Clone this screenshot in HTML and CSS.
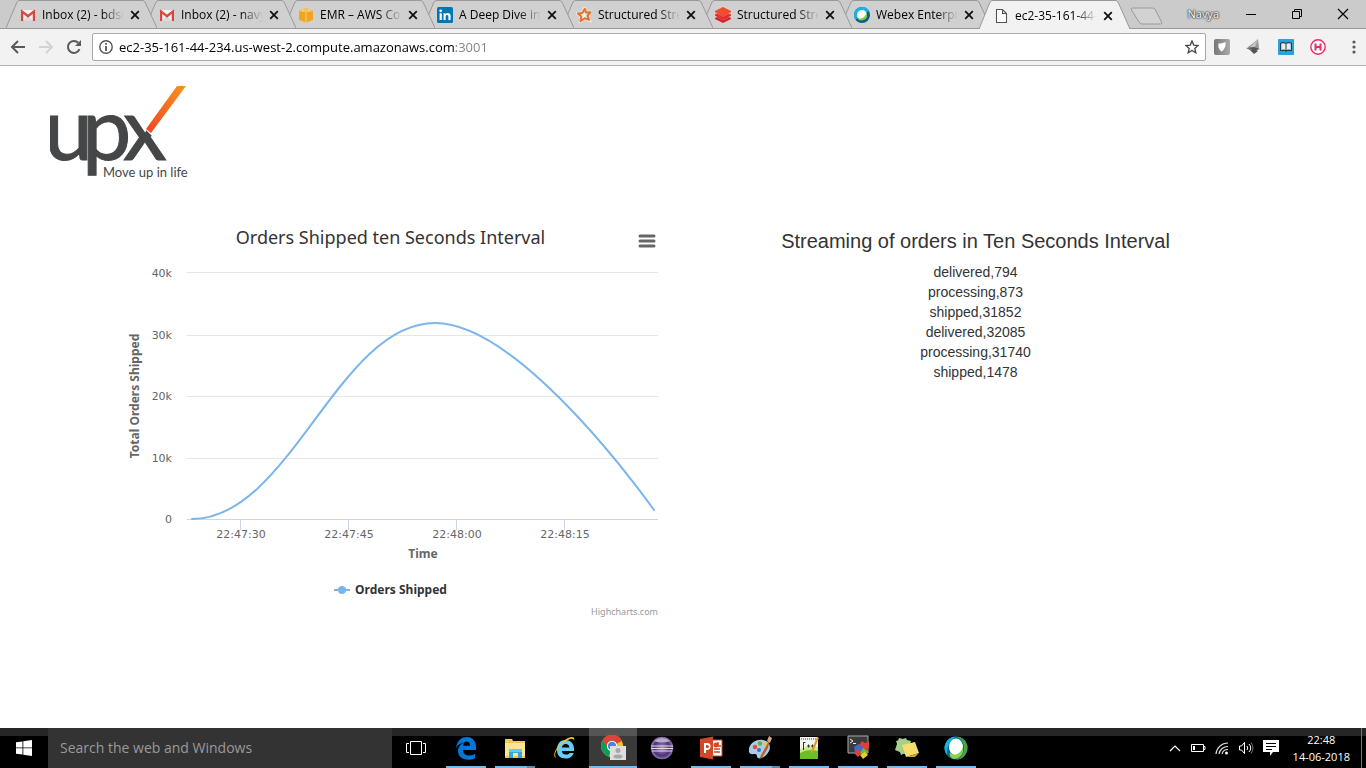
FILE: index.html
```html
<!DOCTYPE html>
<html lang="en">
<head>
<meta charset="utf-8">
<title>Orders Shipped</title>
<link rel="stylesheet" href="styles.css">
</head>
<body>
<svg class="defs" width="0" height="0" aria-hidden="true">
  <defs>
    <symbol id="gmail" viewBox="0 0 16 16"><path d="M1 3h14v11H1z" fill="#f3f1f0"/><path d="M3 14l5-5 5 5z" fill="#dcdad9"/><path d="M1 14V3.4L8 9l7-5.600V14h-2.200V6.700L8 10.800 3.200 6.700V14z" fill="#d8453a"/><path d="M1 3l7 5.500L15 3" fill="none" stroke="#d8453a" stroke-width="1.400"/></symbol>
    <symbol id="cross" viewBox="0 0 10 10"><path d="M1.200 1.200l7.600 7.600M8.800 1.200L1.200 8.800" stroke="#111" stroke-width="1.800" fill="none"/></symbol>
    <symbol id="webex" viewBox="0 0 24 24"><circle cx="12" cy="12" r="11.500" fill="#08668f"/><path d="M12 .5A11.500 11.500 0 0 0 3 19c0-8 2-14 9-18.500z" fill="#17b4e2"/><path d="M12 .5a11.500 11.500 0 0 1 0 23c5-2 8-6 8-12S16 2 12 .5z" fill="#45a746"/><ellipse cx="12" cy="11" rx="7" ry="8.500" fill="#fff"/><path d="M6 16c3 5 10 3 13-5 1 7-3 11-8 12-4 0-6-3-5-7z" fill="#8ed34a"/></symbol>
    <symbol id="webextab" viewBox="0 0 16 16"><circle cx="8" cy="8" r="8" fill="#0b5f86"/><path d="M8 0a8 8 0 0 0-6.500 12.500L8 8l7-4A8 8 0 0 0 8 0z" fill="#16b5e6"/><circle cx="8" cy="8" r="5" fill="#fff"/><path d="M12.500 5.500c2 4-1 8.500-6 8-2-.3-3-1.500-3-2.500 4 2 8-1 9-5.500z" fill="#7ecb3f"/></symbol>
  </defs>
</svg>

<header class="browser">
  <div class="strip">
    <nav class="tabs" aria-label="Tabs">
      <div class="tab"><svg class="edge" viewBox="0 0 151 28" preserveAspectRatio="none"><path d="M0 28L11 2l2-1.500h124l2 1.500 12 26"/></svg><svg class="fav"><use href="#gmail"/></svg><span class="label">Inbox (2) - bdsu</span><button class="close" aria-label="Close tab"><svg width="10" height="10"><use href="#cross"/></svg></button></div>
      <div class="tab"><svg class="edge" viewBox="0 0 151 28" preserveAspectRatio="none"><path d="M0 28L11 2l2-1.500h124l2 1.500 12 26"/></svg><svg class="fav"><use href="#gmail"/></svg><span class="label">Inbox (2) - navy</span><button class="close" aria-label="Close tab"><svg width="10" height="10"><use href="#cross"/></svg></button></div>
      <div class="tab"><svg class="edge" viewBox="0 0 151 28" preserveAspectRatio="none"><path d="M0 28L11 2l2-1.500h124l2 1.500 12 26"/></svg><svg class="fav" viewBox="0 0 16 16"><path d="M1 4l7-3 7 3v9l-7 2.500L1 13z" fill="#efa51f"/><path d="M1 4l7 1.600L15 4 8 1z" fill="#f9c35c"/><path d="M8 5.600V15.500M5 5V1.800M11 5V1.800" stroke="#f9d084" stroke-width="1"/></svg><span class="label">EMR – AWS Co</span><button class="close" aria-label="Close tab"><svg width="10" height="10"><use href="#cross"/></svg></button></div>
      <div class="tab"><svg class="edge" viewBox="0 0 151 28" preserveAspectRatio="none"><path d="M0 28L11 2l2-1.500h124l2 1.500 12 26"/></svg><svg class="fav" viewBox="0 0 16 16"><rect width="16" height="16" rx="1.500" fill="#0077b5"/><circle cx="3.700" cy="3.800" r="1.400" fill="#fff"/><path d="M2.600 6.200h2.200V13H2.600zM6.500 6.200h2.100v1c1.400-2 5-1.500 5 1.700V13h-2.200V9.500c0-2-2.700-2-2.700 0V13H6.500z" fill="#fff"/></svg><span class="label">A Deep Dive int</span><button class="close" aria-label="Close tab"><svg width="10" height="10"><use href="#cross"/></svg></button></div>
      <div class="tab"><svg class="edge" viewBox="0 0 151 28" preserveAspectRatio="none"><path d="M0 28L11 2l2-1.500h124l2 1.500 12 26"/></svg><svg class="fav" viewBox="0 0 16 16"><path d="M8.500 1.500l1.400 4 4.800-.3-3.400 3.400 2 4.600-4.500-1.700-4.600 3 .9-5L1.500 6.500l4.700-.7z" fill="#eee" stroke="#eee" stroke-width="3"/><path d="M8.800 1.800l1.200 3.800 4.600-.3-3.200 3.400 1.700 4.200-4.300-1.600-4.400 2.900.9-4.800L1.800 6.500l4.500-.6z" fill="none" stroke="#e8702a" stroke-width="2" stroke-linejoin="round"/></svg><span class="label">Structured Stre</span><button class="close" aria-label="Close tab"><svg width="10" height="10"><use href="#cross"/></svg></button></div>
      <div class="tab"><svg class="edge" viewBox="0 0 151 28" preserveAspectRatio="none"><path d="M0 28L11 2l2-1.500h124l2 1.500 12 26"/></svg><svg class="fav" viewBox="0 0 16 16"><path d="M0 11l8-4 8 4v1l-8 4-8-4z" fill="#d91f26"/><path d="M0 7.500l8-4 8 4v1.200l-8 4-8-4z" fill="#e72b28"/><path d="M0 4l8-4 8 4v1.300l-8 4-8-4z" fill="#f14c2b"/><path d="M0 5.600l8 4 8-4M0 9.100l8 4 8-4" stroke="#d8b9b5" stroke-width=".3" fill="none"/></svg><span class="label">Structured Stre</span><button class="close" aria-label="Close tab"><svg width="10" height="10"><use href="#cross"/></svg></button></div>
      <div class="tab"><svg class="edge" viewBox="0 0 151 28" preserveAspectRatio="none"><path d="M0 28L11 2l2-1.500h124l2 1.500 12 26"/></svg><svg class="fav"><use href="#webextab"/></svg><span class="label">Webex Enterpri</span><button class="close" aria-label="Close tab"><svg width="10" height="10"><use href="#cross"/></svg></button></div>
      <div class="tab active"><svg class="edge" viewBox="0 0 151 28" preserveAspectRatio="none"><path d="M0 28L11 2l2-1.500h124l2 1.500 12 26"/></svg><svg class="fav" viewBox="0 0 16 16"><path d="M3.500 1.500h6l4 4v9h-10zM9.500 1.500v4h4" fill="#fff" stroke="#555" stroke-width="1.100"/></svg><span class="label">ec2-35-161-44-</span><button class="close" aria-label="Close tab"><svg width="10" height="10"><use href="#cross"/></svg></button></div>
    </nav>
    <button class="newtab" aria-label="New tab"><svg width="34" height="18" viewBox="0 0 34 18"><path d="M2.500 1h20q2 0 3 2l6 12q1 2-1 2H12q-2 0-3-2L1.500 3q-1-2 1-2z" fill="#d2d2d2" stroke="#9a9a9a"/></svg></button>
    <div class="window">
      <span class="profile">Navya</span>
      <button aria-label="Minimize"><svg width="12" height="12"><path d="M1 6.500h10" stroke="#000"/></svg></button>
      <button aria-label="Restore"><svg width="12" height="12"><path d="M1.500 3.500h7v7h-7zM3.500 3V1.500h7v7H9" fill="none" stroke="#000"/></svg></button>
      <button aria-label="Close"><svg width="12" height="12"><path d="M1 1l10 10M11 1L1 11" stroke="#000" stroke-width="1.200"/></svg></button>
    </div>
  </div>
  <div class="toolbar">
    <div class="nav">
      <button aria-label="Back"><svg width="16" height="16"><path d="M15 8H2M8 2L2 8l6 6" fill="none" stroke="#5a5a5a" stroke-width="2"/></svg></button>
      <button aria-label="Forward"><svg width="16" height="16"><path d="M1 8h13M8 2l6 6-6 6" fill="none" stroke="#d3d3d3" stroke-width="2"/></svg></button>
      <button aria-label="Reload"><svg width="16" height="16"><path d="M13.500 10.200A6 6 0 1 1 12.300 3.800" fill="none" stroke="#5a5a5a" stroke-width="2"/><path d="M15 1v6H9z" fill="#5a5a5a"/></svg></button>
    </div>
    <div class="omnibox">
      <svg width="14" height="14"><circle cx="7" cy="7" r="6.200" fill="none" stroke="#555" stroke-width="1.400"/><path d="M7 6v5M7 3v1.800" stroke="#555" stroke-width="1.800"/></svg>
      <input class="url" aria-label="Address" value="ec2-35-161-44-234.us-west-2.compute.amazonaws.com:3001">
      <button aria-label="Bookmark"><svg width="14" height="14"><path d="M7 1l1.700 4.100 4.400.4-3.300 2.900 1 4.400L7 10.500l-3.800 2.300 1-4.400L.9 5.500l4.400-.4z" fill="none" stroke="#444" stroke-width="1.300"/></svg></button>
    </div>
    <div class="ext">
      <button aria-label="Shield extension"><svg width="16" height="16"><defs><linearGradient id="sh"><stop stop-color="#777"/><stop offset="1" stop-color="#aaa"/></linearGradient></defs><rect width="16" height="16" rx="2" fill="url(#sh)"/><path d="M4.500 4.500q4 0 7-1.500 1 6-4 9.500-4-3-3-8z" fill="#fff"/></svg></button>
      <button aria-label="Rocket extension"><svg width="16" height="16"><path d="M2 8l4-3 6-5 1 9-4 5-5-3z" fill="#999"/><path d="M4 8l8-8-4 11z" fill="#c4c4c4"/><path d="M0 9l8-1 6 2-4 1 2 1-4 3-4-4z" fill="#555"/><path d="M0 9l5 1 1 1z" fill="#bbb"/></svg></button>
      <button aria-label="Dictionary extension"><svg width="16" height="16"><rect width="16" height="16" rx="1" fill="#24a3dd"/><path d="M2 4q4-2 6 0 2-2 6 0v8H9l-1 1-1-1H2z" fill="#263e4b"/><path d="M3.200 4.600q3-1 4.300.2V11q-2-1-4.300 0zM12.800 4.600q-3-1-4.300.2V11q2-1 4.300 0z" fill="#e3eef2"/></svg></button>
      <button aria-label="H extension"><svg width="16" height="16"><circle cx="8" cy="8" r="7.200" fill="#fff" stroke="#ee2a63" stroke-width="1.400"/><path d="M5.500 4.500v7M10.500 4.500v7M5.500 8h5" stroke="#ee2a63" stroke-width="2"/></svg></button>
      <button class="more" aria-label="Menu"><svg width="4" height="14"><circle cx="2" cy="2" r="1.600" fill="#5a5a5a"/><circle cx="2" cy="7" r="1.600" fill="#5a5a5a"/><circle cx="2" cy="12" r="1.600" fill="#5a5a5a"/></svg></button>
    </div>
  </div>
</header>

<main class="page">
  <div class="brand">
    <svg width="140" height="96" viewBox="0 0 140 96" role="img" aria-label="upx Move up in life">
      <defs><linearGradient id="tick" x1="0" y1="1" x2="1" y2="0"><stop stop-color="#f04523"/><stop offset="1" stop-color="#f7941e"/></linearGradient></defs>
      <text class="wordmark" x="-6 32 73" y="74">upx</text>
      <path d="M94 42L110 22h14v8L102 50z" fill="#fff"/>
      <path d="M96 43L127 0h9l-35 47z" fill="url(#tick)"/>
      <text class="tagline" x="53" y="91">Move up in life</text>
    </svg>
  </div>
  <div class="columns">
    <figure class="chart">
      <div class="charthead">
        <h2>Orders Shipped ten Seconds Interval</h2>
        <button class="context" aria-label="Chart context menu"><svg width="18" height="14"><path d="M2 2h14M2 7h14M2 12h14" stroke="#666" stroke-width="3" stroke-linecap="round"/></svg></button>
      </div>
      <svg class="plot" viewBox="0 0 555 305">
        <path class="grid" d="M74 12.500h471M74 75.500h471M74 136.500h471M74 198.500h471"/>
        <path class="axis" d="M74 259.500h471M127.500 260v10M235.500 260v10M343.500 260v10M451.500 260v10"/>
        <g class="ticks end"><text x="59" y="17">40k</text><text x="59" y="79">30k</text><text x="59" y="140">20k</text><text x="59" y="202">10k</text><text x="59" y="263">0</text></g>
        <g class="ticks"><text x="128" y="278">22:47:30</text><text x="236" y="278">22:47:45</text><text x="344" y="278">22:48:00</text><text x="452" y="278">22:48:15</text></g>
        <text class="axistitle" x="310" y="298">Time</text>
        <text class="axistitle" transform="translate(26 136) rotate(-90)">Total Orders Shipped</text>
        <path class="line" d="M79 259C177 259 225 63 322 63C410 63 541 250 541 250"/>
      </svg>
      <div class="legend"><svg width="16" height="10"><path d="M0 5h16" stroke="#7cb5ec" stroke-width="2"/><circle cx="8" cy="5" r="4" fill="#7cb5ec"/></svg><span>Orders Shipped</span></div>
      <a class="credit" href="#">Highcharts.com</a>
    </figure>
    <section class="stream">
      <h3>Streaming of orders in Ten Seconds Interval</h3>
      <ul>
        <li>delivered,794</li>
        <li>processing,873</li>
        <li>shipped,31852</li>
        <li>delivered,32085</li>
        <li>processing,31740</li>
        <li>shipped,1478</li>
      </ul>
    </section>
  </div>
</main>

<footer class="taskbar">
  <button class="slot" aria-label="Start"><svg width="16" height="16"><path d="M0 2.300l6.500-.9v6.100H0zM7.300 1.300L16 0v7.500H7.300zM0 8.300h6.500v6.200L0 13.700zM7.300 8.300H16V16l-8.700-1.300z" fill="#fff"/></svg></button>
  <input class="search" aria-label="Search" placeholder="Search the web and Windows">
  <button class="slot" aria-label="Task view"><svg width="20" height="14"><path d="M4.500.5h11v13h-11zM3 2.500H.5v9H3M17 2.500h2.500v9H17" fill="none" stroke="#fff"/></svg></button>
  <nav class="apps" aria-label="Applications">
    <button class="slot run" aria-label="Edge"><svg width="24" height="24"><path d="M2 12C3 4 8 1 13 1c6 0 9 5 9 10v3H9c0 4 3 5.500 6 5.500 2.500 0 4.500-.8 6-1.700v4.500c-2 1-4.500 1.500-7 1.500-6 0-10-3.500-10-9 0-4 3-7 6-8-3 0-6 1.500-8 5.200zM9 9.800h7c0-3-1.200-4.300-3.400-4.300S9.300 7.500 9 9.800z" fill="#0078d7"/></svg></button>
    <button class="slot run multi" aria-label="File Explorer"><svg width="24" height="24"><path d="M2 3h7l1 2h12v17H2z" fill="#f2c85b"/><path d="M2 7h20v13H2z" fill="#ffe494"/><path d="M6 22v-9h13v9h-4v-5h-5v5z" fill="#2fa8e0"/><path d="M6 13h13v3H6z" fill="#51d1f5"/></svg></button>
    <button class="slot" aria-label="Internet Explorer"><svg width="24" height="24"><path d="M13 4c5 0 9 3 9 9v2H10c0 2.500 1.500 3.500 4 3.500 2 0 3-.5 3.500-1.500h4.200c-1 3.500-4 5.500-8 5.500C8 22.500 5 19 5 14c0-6 3-10 8-10zm-3 7.500h7.300c0-2.200-1.300-3.500-3.700-3.500-2 0-3.400 1.200-3.600 3.500z" fill="#67cdf6"/><path d="M4 22C-1 20 5 8 16 2c5-2 7-1 6 3 0-3-3-3-7-.5C6 9 1 18 4 22z" fill="#f5c623"/></svg></button>
    <button class="slot current" aria-label="Chrome"><svg width="26" height="26"><circle cx="12" cy="12" r="11" fill="#fbc116"/><path d="M12 12L2.500 6.500A11 11 0 0 1 22 7z" fill="#db4437"/><path d="M12 12l-3 10.600A11 11 0 0 1 2.500 6.500z" fill="#0f9d58"/><path d="M12 7h10q-2-6-10-6-6 0-9.500 5.500L7.500 13z" fill="#db4437"/><circle cx="12" cy="12" r="5.200" fill="#fff"/><circle cx="12" cy="12" r="4.200" fill="#4285f4"/><path d="M10 12h16v14H10z" fill="#dedede"/><circle cx="18" cy="16.500" r="2.500" fill="#a7a7a7"/><ellipse cx="18" cy="22.500" rx="4.500" ry="2" fill="#a7a7a7"/></svg></button>
    <button class="slot" aria-label="Eclipse"><svg width="24" height="24"><defs><radialGradient id="ec"><stop stop-color="#a78fc4"/><stop offset=".7" stop-color="#4a3274"/><stop offset="1" stop-color="#8b74ad"/></radialGradient></defs><circle cx="12" cy="12" r="11.200" fill="url(#ec)"/><path d="M4 5Q12-1 20 5q-8 3-16 0z" fill="#b9a9cc"/><path d="M1 10h22M1 12.500h22M2 15h20" stroke="#e3daec" stroke-width="1"/></svg></button>
    <button class="slot run" aria-label="PowerPoint"><svg width="24" height="24"><path d="M13 4h10v16H13z" fill="#fff" stroke="#d24726"/><path d="M19 6v4h3M15 13h6M15 16h6" stroke="#d24726" stroke-width="1.500" fill="none"/><circle cx="17" cy="9" r="2.500" fill="#d24726"/><path d="M1 3l13-2.500v23L1 21z" fill="#d24726"/><path d="M5 7h3.500C13 7 12.500 14 8 14H7v3H5zm2 2v3h1q2 0 2-1.500T8 9z" fill="#fff" fill-rule="evenodd"/></svg></button>
    <button class="slot run multi" aria-label="Paint"><svg width="24" height="24"><path d="M1 16C0 8 7 3 15 4c7 1 8 7 6 11-3 6-8 8-11 7-2-1 0-4-3-4-2 0-5 1-6-2z" fill="#a9cce8"/><circle cx="7" cy="11" r="2.200" fill="#e34b35"/><circle cx="12" cy="7.500" r="2.200" fill="#63af3a"/><circle cx="17" cy="8" r="2" fill="#f6c235"/><circle cx="11" cy="14" r="2" fill="#3271c3"/><path d="M22 3l-5 9-6 11 3-1 6-10z" fill="#b8602a"/><path d="M19 5l2-5 3 2-2 5z" fill="#d8a776"/></svg></button>
    <button class="slot run" aria-label="Notepad++"><svg width="24" height="24"><path d="M3 1h18v22H3z" fill="#f2f5ed"/><path d="M3 13q8-4 18-2v12H3z" fill="#c8e88a"/><path d="M3 17q8-5 18-2v8H3z" fill="#6cbf22"/><path d="M4 3h16" stroke="#999" stroke-width="2" stroke-dasharray="1 1"/><path d="M6.500 6v8M6 6.500h2.500M10 10h3M11.500 8.500v3M14 10h3M15.500 8.500v3" stroke="#333" fill="none"/><path d="M20 1l2 1-6 14-2 2v-3z" fill="#e29b2d"/></svg></button>
    <button class="slot run" aria-label="MobaXterm"><svg width="26" height="26"><path d="M3 1h20v17H3z" fill="#393b3d" stroke="#aaa"/><path d="M5 4l3 2-3 2M8 8.500h3" stroke="#eee" fill="none"/><path d="M14 10l3-4 3 2 4-1v6l-5 3z" fill="#e43d32"/><path d="M9 12l5-3 5 4-3 6-6-2z" fill="#4169d8"/><path d="M10 14l4 1 3 3-4 4-3-3z" fill="#e34032"/><path d="M18 13l5 3-3 5-5-3z" fill="#6fbd31"/><path d="M15 20l5-3 3 3-5 4z" fill="#efce28"/></svg></button>
    <button class="slot run" aria-label="Sticky Notes"><svg width="24" height="24"><path d="M1 5l10-3 5 12-10 5z" fill="#9cc8cb"/><path d="M4 2l12 3-4 14L0 14z" fill="#a8cf88"/><path d="M7 9l13-3 4 11-13 4z" fill="#f5dd6e"/><path d="M11 21l13-4-4 4z" fill="#c6aa38"/></svg></button>
    <button class="slot run" aria-label="Webex"><svg width="24" height="24"><use href="#webex"/></svg></button>
  </nav>
  <div class="tray">
    <svg width="12" height="16"><path d="M1 11l5-5 5 5" fill="none" stroke="#fff" stroke-width="1.200"/></svg>
    <svg width="16" height="16"><path d="M1.500 4.500h12v7h-12zM14 6.500h1v3h-1" fill="none" stroke="#fff"/><path d="M3 6h2v4H3z" fill="#fff"/></svg>
    <svg width="14" height="16"><path d="M1 14A12 12 0 0 1 13 3M4 14A9 9 0 0 1 13 6.500M7 14A6 6 0 0 1 13 9.500" fill="none" stroke="#ddd" stroke-width="1.200"/><circle cx="11.500" cy="13" r="1.500" fill="#fff"/></svg>
    <svg width="16" height="16"><path d="M1.500 6h2l3-3.500v11l-3-3.500h-2zM9 6q1.500 2 0 4M11 4q3.500 4 0 8" fill="none" stroke="#fff"/><path d="M13 2.500q4 5.500 0 11" fill="none" stroke="#777"/></svg>
    <svg width="16" height="16"><path d="M0 0h16v12h-6l-3 4v-4H0z" fill="#fff"/><path d="M3 3.500h10M3 6.500h10M3 9.500h6" stroke="#000"/></svg>
    <div class="clock"><time>22:48</time><time>14-06-2018</time></div>
    <button class="peek" aria-label="Show desktop"></button>
  </div>
</footer>
</body>
</html>
```
FILE: styles.css
```css
* { box-sizing: border-box; }
body {
  margin: 0;
  min-height: 100vh;
  display: flex;
  flex-direction: column;
  background: #fff;
  color: #333;
  font: 14px/20px "Liberation Sans", Arial, sans-serif;
}
button { padding: 0; border: 0; background: none; display: flex; align-items: center; justify-content: center; }
svg { display: block; flex: none; }
.defs { position: absolute; }
h2, h3, ul, figure { margin: 0; padding: 0; font-weight: 400; }

/* Browser chrome */
.browser { font: 12px/16px "Open Sans", sans-serif; color: #000; }
.strip { display: flex; height: 29px; background: #cbcbcb; border-bottom: 1px solid #999; }
.tabs { display: flex; padding-left: 6px; min-width: 0; }
.tab {
  position: relative;
  display: flex;
  align-items: center;
  flex: 0 1 151px;
  width: 151px;
  min-width: 0;
  height: 28px;
  padding: 2px 17px 0 14px;
}
.tab + .tab { margin-left: -12px; }
.tab:nth-child(1) { z-index: 8; }
.tab:nth-child(2) { z-index: 7; }
.tab:nth-child(3) { z-index: 6; }
.tab:nth-child(4) { z-index: 5; }
.tab:nth-child(5) { z-index: 4; }
.tab:nth-child(6) { z-index: 3; }
.tab:nth-child(7) { z-index: 2; }
.tab.active { z-index: 9; height: 29px; }
.edge { position: absolute; inset: 0; width: 100%; height: 100%; z-index: -1; }
.edge path { fill: #d0d0d0; stroke: #999; vector-effect: non-scaling-stroke; }
.active .edge path { fill: #f2f2f2; }
.fav { width: 16px; height: 16px; margin-right: 6px; }
.label {
  flex: 1;
  min-width: 0;
  overflow: hidden;
  white-space: nowrap;
  margin-right: 4px;
  mask-image: linear-gradient(to left, transparent 2px, #000 24px);
}
.newtab { width: 34px; height: 28px; padding-top: 3px; }
.window { display: flex; align-items: center; margin-left: auto; height: 27px; }
.window button { width: 46px; height: 27px; }
.profile {
  margin-right: 9px;
  font-size: 11px;
  color: #fff;
  text-shadow: 0 0 1px #333, 0 0 2px #333, 0 0 2px #444;
}
.toolbar { display: flex; align-items: center; height: 37px; padding: 0 6px 0 10px; background: #f2f2f2; border-bottom: 1px solid #b3b3b3; }
.nav { display: flex; gap: 12px; padding-right: 10px; }
.omnibox { flex: 1; display: flex; align-items: center; height: 28px; padding: 0 6px; border: 1px solid #a8a8a8; border-radius: 2px; background: #fff; }
.url {
  flex: 1;
  min-width: 0;
  padding: 0;
  margin: 0 6px;
  border: 0;
  font: 13px/20px "Open Sans", sans-serif;
  background: linear-gradient(to right, #000 337px, #808080 337px);
  background-clip: text;
  color: transparent;
}
.ext { display: flex; align-items: center; gap: 16px; padding-left: 8px; }
.more { width: 12px; margin-left: 6px; }

/* Page */
.page { flex: 1; padding: 20px 0; }
.brand { padding: 0 50px; }
.wordmark { font: 88px Lato, sans-serif; fill: #444647; stroke: #444647; stroke-width: 1; }
.tagline { font: 13px Lato, sans-serif; fill: #444647; }
.columns { display: grid; grid-template-columns: 1fr 1fr; max-width: 1170px; margin: 0 auto; padding-top: 39px; }
.chart { padding: 0 15px; font-family: "Noto Sans", sans-serif; }
.charthead { display: grid; height: 39px; }
.charthead > * { grid-area: 1 / 1; }
.charthead h2 { font-size: 18px; line-height: 32px; text-align: center; }
.context { justify-self: end; width: 22px; height: 22px; margin: 9px 10px 0 0; }
.plot { width: 100%; height: auto; }
.grid { stroke: #e6e6e6; fill: none; }
.axis { stroke: #ccd6eb; fill: none; }
.line { stroke: #7cb5ec; stroke-width: 2; fill: none; stroke-linecap: round; }
.ticks { font-family: "DejaVu Sans", sans-serif; font-size: 11px; fill: #666; text-anchor: middle; }
.end { text-anchor: end; }
.axistitle { font-size: 12px; font-weight: 700; fill: #666; text-anchor: middle; }
.legend { display: flex; justify-content: center; align-items: center; gap: 5px; padding-top: 15px; font-size: 12px; font-weight: 700; line-height: 20px; }
.credit { display: block; padding: 2px 10px 0 0; text-align: right; font-size: 9px; color: #999; text-decoration: none; }
.stream { padding: 10px 15px; text-align: center; }
.stream h3 { font-size: 20px; line-height: 20px; padding-bottom: 11px; }
.stream ul { list-style: none; }

/* Taskbar */
.taskbar {
  display: flex;
  height: 40px;
  background: linear-gradient(#262626 8px, #000 8px);
  color: #fff;
  font: 11px/17px "Open Sans", sans-serif;
}
.slot { flex: none; width: 48px; height: 40px; position: relative; }
.search { flex: 0 1 344px; min-width: 0; padding: 0 12px; border: 0; background: #333; font: 14px/20px "Open Sans", sans-serif; color: #fff; }
.search::placeholder { color: #9a9a9a; opacity: 1; }
.apps { display: flex; gap: 1px; margin-left: 2px; }
.run::after { content: ""; position: absolute; left: 4px; right: 4px; bottom: 0; height: 2px; background: #76b9ed; }
.multi::after { background: linear-gradient(to left, #5a8db4 8px, #76b9ed 8px); }
.current { background: linear-gradient(#555 8px, #3a3a3a 8px); border-bottom: 2px solid #76b9ed; }
.tray { display: flex; align-items: center; gap: 9px; margin-left: auto; }
.clock { display: flex; flex-direction: column; align-items: center; margin: 0 2px 0 5px; }
.peek { width: 5px; height: 40px; border-left: 1px solid #777; }
```
